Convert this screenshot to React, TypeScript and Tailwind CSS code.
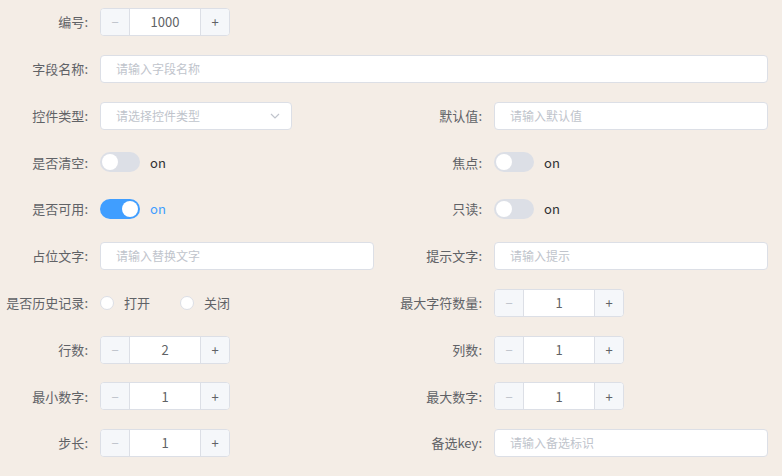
import React from "react";

const F = { fontFamily: '"Microsoft YaHei","Noto Sans CJK SC",sans-serif' };

function Label({ t }: { t: string }) {
  return <div className="w-[100px] shrink-0 pr-[12px] text-right text-[13px] text-[#606266] whitespace-nowrap">{t}:</div>;
}
function Num({ v }: { v: string }) {
  return (
    <div className="flex h-[28px] w-[130px] rounded-[4px] border border-[#dcdfe6] bg-white text-[13px] overflow-hidden">
      <div className="w-[29px] flex items-center justify-center bg-[#f5f7fa] border-r border-[#dcdfe6] text-[#c0c4cc]">−</div>
      <div className="flex-1 flex items-center justify-center text-[#606266]">{v}</div>
      <div className="w-[29px] flex items-center justify-center bg-[#f5f7fa] border-l border-[#dcdfe6] text-[#606266]">+</div>
    </div>
  );
}
function Input({ p, w = "flex-1" }: { p: string; w?: string }) {
  return <div className={`${w} h-[28px] rounded-[4px] border border-[#dcdfe6] bg-white flex items-center px-[15px] text-[12px] text-[#c0c4cc]`}>{p}</div>;
}
function Sw({ on }: { on?: boolean }) {
  return (
    <div className="flex items-center gap-[10px]">
      <div className={`w-[40px] h-[20px] rounded-full relative ${on ? "bg-[#409eff]" : "bg-[#dcdfe6]"}`}>
        <div className={`absolute top-[2px] w-[16px] h-[16px] rounded-full bg-white ${on ? "left-[22px]" : "left-[2px]"}`} />
      </div>
      <span className={`text-[13px] ${on ? "text-[#409eff]" : "text-[#303133]"}`}>on</span>
    </div>
  );
}
function Item({ l, children }: { l: string; children: React.ReactNode }) {
  return <div className="flex items-center h-[28px] flex-1 pr-[0px]"><Label t={l} /><div className="flex-1 flex items-center">{children}</div></div>;
}
function Row({ children }: { children: React.ReactNode }) {
  return <div className="flex gap-[20px]">{children}</div>;
}

export default function App() {
  return (
    <div style={F} className="w-[782px] h-[476px] bg-[#f4ede6] pt-[8px] pr-[14px] flex flex-col gap-[18.8px] overflow-hidden">
      <Row><Item l="编号"><Num v="1000" /></Item><div className="flex-1" /></Row>
      <Row><Item l="字段名称"><Input p="请输入字段名称" /></Item></Row>
      <Row>
        <Item l="控件类型">
          <div className="w-[192px] h-[28px] rounded-[4px] border border-[#dcdfe6] bg-white flex items-center justify-between px-[15px] pr-[10px] text-[12px] text-[#c0c4cc]">
            请选择控件类型
            <svg width="12" height="12" viewBox="0 0 12 12"><path d="M2 4l4 4 4-4" fill="none" stroke="#c0c4cc" strokeWidth="1.2" /></svg>
          </div>
        </Item>
        <Item l="默认值"><Input p="请输入默认值" /></Item>
      </Row>
      <Row><Item l="是否清空"><Sw /></Item><Item l="焦点"><Sw /></Item></Row>
      <Row><Item l="是否可用"><Sw on /></Item><Item l="只读"><Sw /></Item></Row>
      <Row><Item l="占位文字"><Input p="请输入替换文字" /></Item><Item l="提示文字"><Input p="请输入提示" /></Item></Row>
      <Row>
        <Item l="是否历史记录">
          <div className="flex items-center text-[13px] text-[#606266]">
            <div className="w-[14px] h-[14px] rounded-full border border-[#dcdfe6] bg-white" />
            <span className="ml-[10px]">打开</span>
            <div className="ml-[30px] w-[14px] h-[14px] rounded-full border border-[#dcdfe6] bg-white" />
            <span className="ml-[10px]">关闭</span>
          </div>
        </Item>
        <Item l="最大字符数量"><Num v="1" /></Item>
      </Row>
      <Row><Item l="行数"><Num v="2" /></Item><Item l="列数"><Num v="1" /></Item></Row>
      <Row><Item l="最小数字"><Num v="1" /></Item><Item l="最大数字"><Num v="1" /></Item></Row>
      <Row><Item l="步长"><Num v="1" /></Item><Item l="备选key"><Input p="请输入备选标识" /></Item></Row>
    </div>
  );
}
